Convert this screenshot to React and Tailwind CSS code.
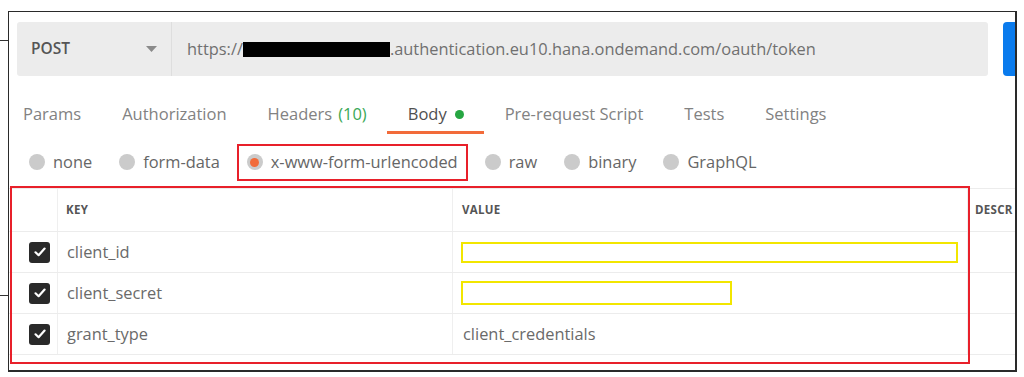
import React from "react";

const font = { fontFamily: '"Open Sans", "Liberation Sans", sans-serif' };

function Radio({ label, selected }) {
  return (
    <div className="flex items-center gap-[8px] px-[8px]">
      <span className="w-[16px] h-[16px] rounded-full bg-[#cbcbcb] flex items-center justify-center">
        {selected && <span className="w-[9px] h-[9px] rounded-full bg-[#f26b3a]" />}
      </span>
      <span className="text-[16.4px] text-[#666]">{label}</span>
    </div>
  );
}

function Check() {
  return (
    <span className="w-[21px] h-[21px] rounded-[3px] bg-[#2a2a2a] flex items-center justify-center">
      <svg width="14" height="14" viewBox="0 0 14 14">
        <path d="M2.5 7.3 L5.6 10.2 L11.6 3.6" fill="none" stroke="#fff" strokeWidth="2.2" strokeLinecap="round" strokeLinejoin="round" />
      </svg>
    </span>
  );
}

function Row({ k, v, yellow }) {
  return (
    <div className="flex h-[41px] border-b border-[#ececec]">
      <div className="w-[48px] shrink-0 flex items-center justify-end pr-[7px]">
        <Check />
      </div>
      <div className="w-[395px] shrink-0 border-l border-[#efefef] flex items-center pl-[9px] text-[16.4px] text-[#6a6a6a]">
        {k}
      </div>
      <div className="w-[515px] shrink-0 border-l border-[#efefef] flex items-center pl-[10px] text-[16.4px] text-[#6a6a6a]">
        {v}
        {yellow}
      </div>
      <div className="flex-1 border-l border-[#efefef]" />
    </div>
  );
}

export default function App() {
  const tabs = [
    { l: "Params" },
    { l: "Authorization" },
    { l: "Headers", extra: <span className="text-[#3aa856] ml-[6px]">(10)</span> },
    { l: "Body", active: true },
    { l: "Pre-request Script" },
    { l: "Tests" },
    { l: "Settings" },
  ];
  return (
    <div className="relative w-[1024px] h-[377px] bg-white overflow-hidden" style={font}>
      <div className="absolute left-[-20px] top-[40px] w-[40px] h-[256px] border border-[#333]" />
      <div className="relative ml-[8px] mt-[11px] w-[1009px] h-[361px] bg-white border-t border-l border-r-2 border-b-2 border-[#2a2a2a] overflow-hidden">
        {/* URL row */}
        <div className="flex mt-[10px] ml-[8px]">
          <div className="w-[971px] h-[54px] shrink-0 rounded-[3px] bg-[#ececec] flex">
            <div className="w-[155px] shrink-0 border-r border-[#dedede] flex items-center pl-[14px] pr-[14px] justify-between">
              <span className="text-[15.5px] font-semibold text-[#555]">POST</span>
              <svg width="11" height="6" viewBox="0 0 11 6">
                <path d="M0 0 L11 0 L5.5 6 Z" fill="#8a8a8a" />
              </svg>
            </div>
            <div className="flex items-center pl-[15px] text-[16.4px] text-[#707070]">
              <span>https://</span>
              <span className="inline-block w-[147px] h-[15px] bg-black" />
              <span>.authentication.eu10.hana.ondemand.com/oauth/token</span>
            </div>
          </div>
          <div className="ml-[15px] w-[60px] h-[54px] shrink-0 rounded-[4px] bg-[#0a7bed]" />
        </div>

        {/* Tabs */}
        <div className="flex mt-[23px] pl-[14px]">
          {tabs.map((t, i) => (
            <div
              key={t.l}
              className={
                "h-[35px] flex items-start pt-[3px] text-[16.5px] border-b-[3px] " +
                (i === 0 ? "pr-[20.5px] " : "px-[20.5px] ") +
                (t.active ? "border-[#f26b3a] text-[#505050]" : "border-transparent text-[#828282]")
              }
            >
              <span>{t.l}</span>
              {t.extra}
              {t.active && <span className="w-[9px] h-[9px] rounded-full bg-[#26a642] ml-[8px] mt-[8px]" />}
            </div>
          ))}
        </div>

        {/* Radios */}
        <div className="flex items-center gap-[11px] mt-[10px] pl-[12px] h-[37px]">
          <Radio label="none" />
          <Radio label="form-data" />
          <div className="h-[37px] flex items-center border-2 border-[#e8202a] -ml-[2px] -mr-[2px]">
            <Radio label="x-www-form-urlencoded" selected />
          </div>
          <Radio label="raw" />
          <Radio label="binary" />
          <Radio label="GraphQL" />
        </div>

        {/* Table */}
        <div className="relative mt-[7px]">
          <div className="flex h-[44px] border-t border-b border-[#ececec]">
            <div className="w-[48px] shrink-0" />
            <div className="w-[395px] shrink-0 border-l border-[#efefef] flex items-center pl-[8px] text-[11.5px] font-bold text-[#555] tracking-[0.3px]">
              KEY
            </div>
            <div className="w-[515px] shrink-0 border-l border-[#efefef] flex items-center pl-[9px] text-[11.5px] font-bold text-[#555] tracking-[0.3px]">
              VALUE
            </div>
            <div className="flex-1 border-l border-[#efefef] flex items-center pl-[7px] text-[11.5px] font-bold text-[#555] tracking-[0.3px] whitespace-nowrap overflow-hidden">
              DESCR
            </div>
          </div>
          <Row
            k="client_id"
            yellow={<span className="block -ml-[2px] w-[497px] h-[21px] border-2 border-[#f2e600]" />}
          />
          <Row
            k="client_secret"
            yellow={<span className="block -ml-[2px] w-[271px] h-[24px] border-2 border-[#f2e600]" />}
          />
          <Row k="grant_type" v="client_credentials" />
          <div className="absolute left-[1px] top-[-2px] w-[960px] h-[178px] border-2 border-[#e8202a] pointer-events-none" />
        </div>
      </div>
    </div>
  );
}
